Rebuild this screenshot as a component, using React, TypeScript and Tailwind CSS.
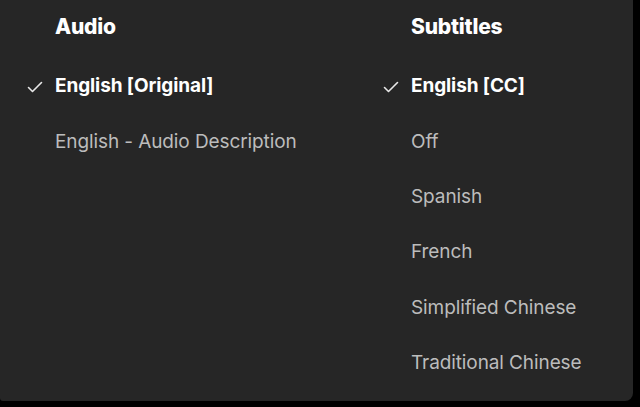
import React from "react";

const Check = () => (
  <svg width="16" height="12" viewBox="0 0 16 12" fill="none" className="shrink-0">
    <path d="M1.5 6.5 L5.5 10.5 L14.5 1.5" stroke="#e8e8e8" strokeWidth="1.6" strokeLinecap="round" strokeLinejoin="round" />
  </svg>
);

type Item = { label: string; selected?: boolean };

const Column = ({ title, items, width }: { title: string; items: Item[]; width: string }) => (
  <div className={`flex flex-col ${width}`}>
    <div className="h-[53px] flex items-center pl-[55px] text-white font-extrabold text-[21px] tracking-[-0.2px]">{title}</div>
    <div className="mt-[6px] flex flex-col">
      {items.map((it) => (
        <div key={it.label} className="h-[55.3px] flex items-center">
          <div className="w-[55px] pl-[27px] flex items-center">{it.selected ? <Check /> : null}</div>
          <span
            className={
              it.selected
                ? "text-white font-bold text-[19px] tracking-[-0.1px]"
                : "text-[#bcbcbc] text-[19px] tracking-[-0.1px]"
            }
          >
            {it.label}
          </span>
        </div>
      ))}
    </div>
  </div>
);

export default function App() {
  return (
    <div className="w-[640px] h-[407px] bg-black" style={{ fontFamily: "Inter, 'Noto Sans', sans-serif" }}>
      <div className="w-[633px] h-[401px] bg-[#262626] rounded-br-[8px] rounded-bl-[3px] flex">
        <Column
          title="Audio"
          width="w-[356px]"
          items={[{ label: "English [Original]", selected: true }, { label: "English - Audio Description" }]}
        />
        <Column
          title="Subtitles"
          width="w-[277px]"
          items={[
            { label: "English [CC]", selected: true },
            { label: "Off" },
            { label: "Spanish" },
            { label: "French" },
            { label: "Simplified Chinese" },
            { label: "Traditional Chinese" },
          ]}
        />
      </div>
    </div>
  );
}
